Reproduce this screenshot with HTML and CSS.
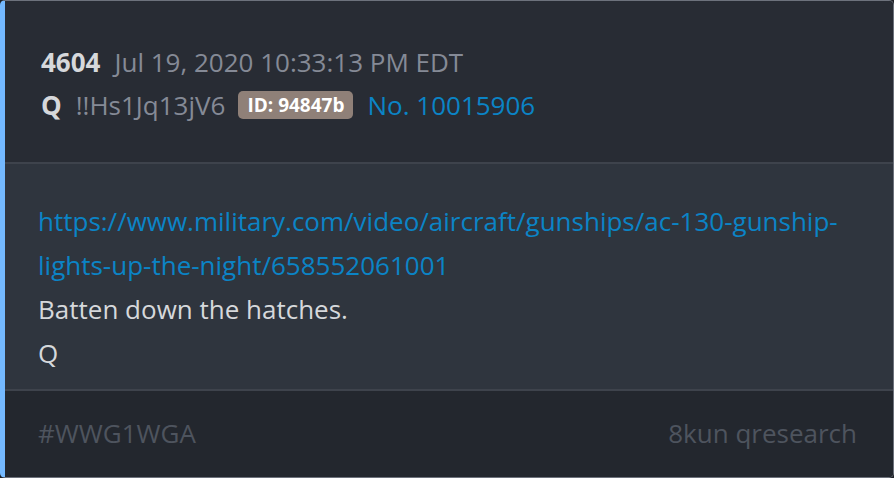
FILE: index.html
```html
<!DOCTYPE html>
<html>
<head>
<meta charset="utf-8">
<link rel="stylesheet" href="styles.css">
</head>
<body>
<div class="card">
  <div class="head">
    <div class="row"><span class="num">4604</span><span class="date">Jul 19, 2020 10:33:13 PM EDT</span></div>
    <div class="row"><span class="name">Q</span><span class="trip">!!Hs1Jq13jV6</span><span class="badge">ID: 94847b</span><a class="postno">No. 10015906</a></div>
  </div>
  <div class="body">
    <a class="link">https://www.military.com/video/aircraft/gunships/ac-130-gunship-lights-up-the-night/658552061001</a>
    <div class="text">Batten down the hatches.</div>
    <div class="text">Q</div>
  </div>
  <div class="foot">
    <span>#WWG1WGA</span>
    <span>8kun qresearch</span>
  </div>
</div>
</body>
</html>
```

FILE: styles.css
```css
html, body { margin: 0; padding: 0; background: #1e2127; }
body { font-family: "Open Sans", "DejaVu Sans", sans-serif; }
.card {
  box-sizing: border-box;
  width: 894px;
  height: 478px;
  border: 1px solid #6d727c;
  border-left: 5px solid #74b9ff;
  border-radius: 5px;
  overflow: hidden;
  display: flex;
  flex-direction: column;
  font-size: 26px;
}
.head {
  background: #282c34;
  height: 163px;
  flex: none;
  box-sizing: border-box;
  padding: 39px 0 0 36px;
  border-bottom: 2px solid #3e434c;
}
.row { display: flex; align-items: center; height: 43px; }
.num { font-weight: 700; color: #d6d8db; margin-right: 14px; }
.date { color: #858a96; }
.name { font-weight: 700; color: #d6d8db; margin-right: 14px; }
.trip { color: #858a96; margin-right: 13px; }
.badge {
  background: #8f8078;
  color: #fff;
  font-weight: 700;
  font-size: 19px;
  border-radius: 5px;
  padding: 1px 9px;
  line-height: 26px;
  margin-right: 14px;
}
.postno { color: #0b84c6; }
.body {
  background: #2f353e;
  height: 227px;
  flex: none;
  box-sizing: border-box;
  padding: 35px 30px 0 33px;
  line-height: 44px;
  border-bottom: 2px solid #3e434c;
}
.link { color: #0b84c6; display: block; }
.text { color: #d6d8db; }
.foot {
  flex: 1;
  background: #23272e;
  display: flex;
  justify-content: space-between;
  align-items: center;
  padding: 0 36px 2px 33px;
  color: #4e545e;
}
```
